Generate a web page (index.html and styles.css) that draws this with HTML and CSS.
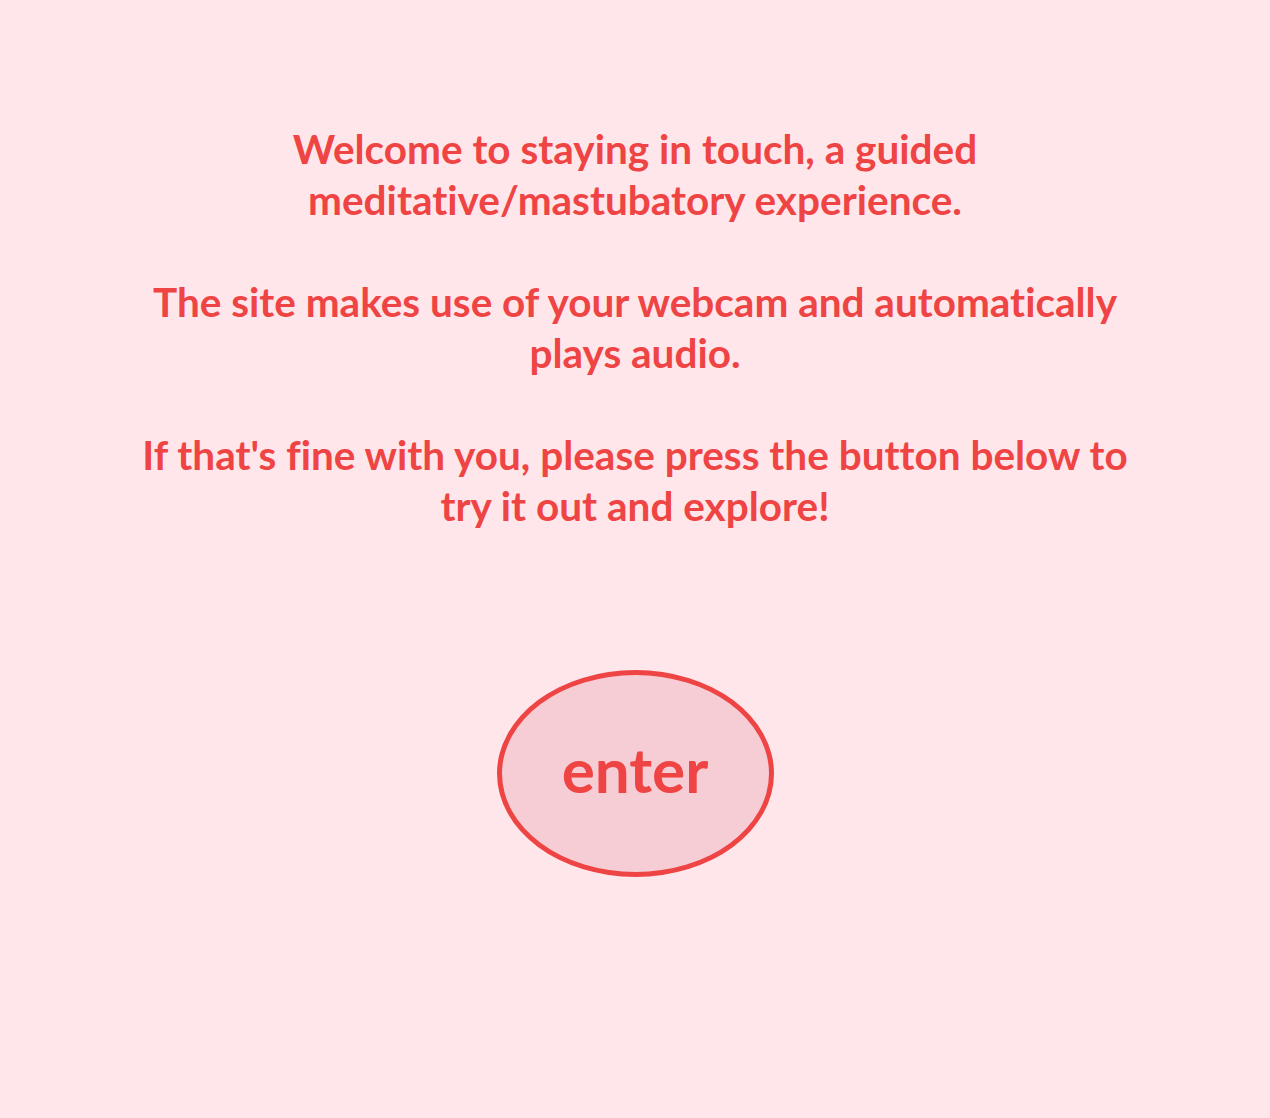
FILE: index.html
```html
<!DOCTYPE html>
<html lang="en">
<head>
<meta charset="utf-8">
<title>staying in touch</title>
<link rel="stylesheet" href="styles.css">
</head>
<body>
<main class="page">
  <div class="intro">
    <p class="line">Welcome to staying in touch, a guided meditative/mastubatory experience.</p>
    <p class="line">The site makes use of your webcam and automatically plays audio.</p>
    <p class="line">If that's fine with you, please press the button below to try it out and explore!</p>
  </div>
  <button class="enter" type="button">enter</button>
</main>
</body>
</html>
```
FILE: styles.css
```css
html, body {
  margin: 0;
  padding: 0;
  background: #ffe6ea;
}
.page {
  min-height: 1118px;
  display: flex;
  flex-direction: column;
  align-items: center;
  padding-top: 123px;
  box-sizing: border-box;
  font-family: "Lato", "Noto Sans", sans-serif;
  color: #ef4444;
}
.intro {
  width: 1010px;
  text-align: center;
  font-weight: 700;
  font-size: 40.5px;
  line-height: 51px;
  font-variant-ligatures: no-common-ligatures;
}
.line {
  margin: 0 0 51px 0;
}
.line:last-child {
  margin-bottom: 0;
}
.enter {
  margin-top: 139px;
  width: 277px;
  height: 207px;
  border: 5px solid #ef4444;
  border-radius: 50%;
  background: #f6cdd5;
  color: #ef4444;
  font-family: "Lato", "Noto Sans", sans-serif;
  font-weight: 700;
  font-size: 62px;
  line-height: 1;
  padding: 0 0 10px 0;
  cursor: pointer;
}
```
